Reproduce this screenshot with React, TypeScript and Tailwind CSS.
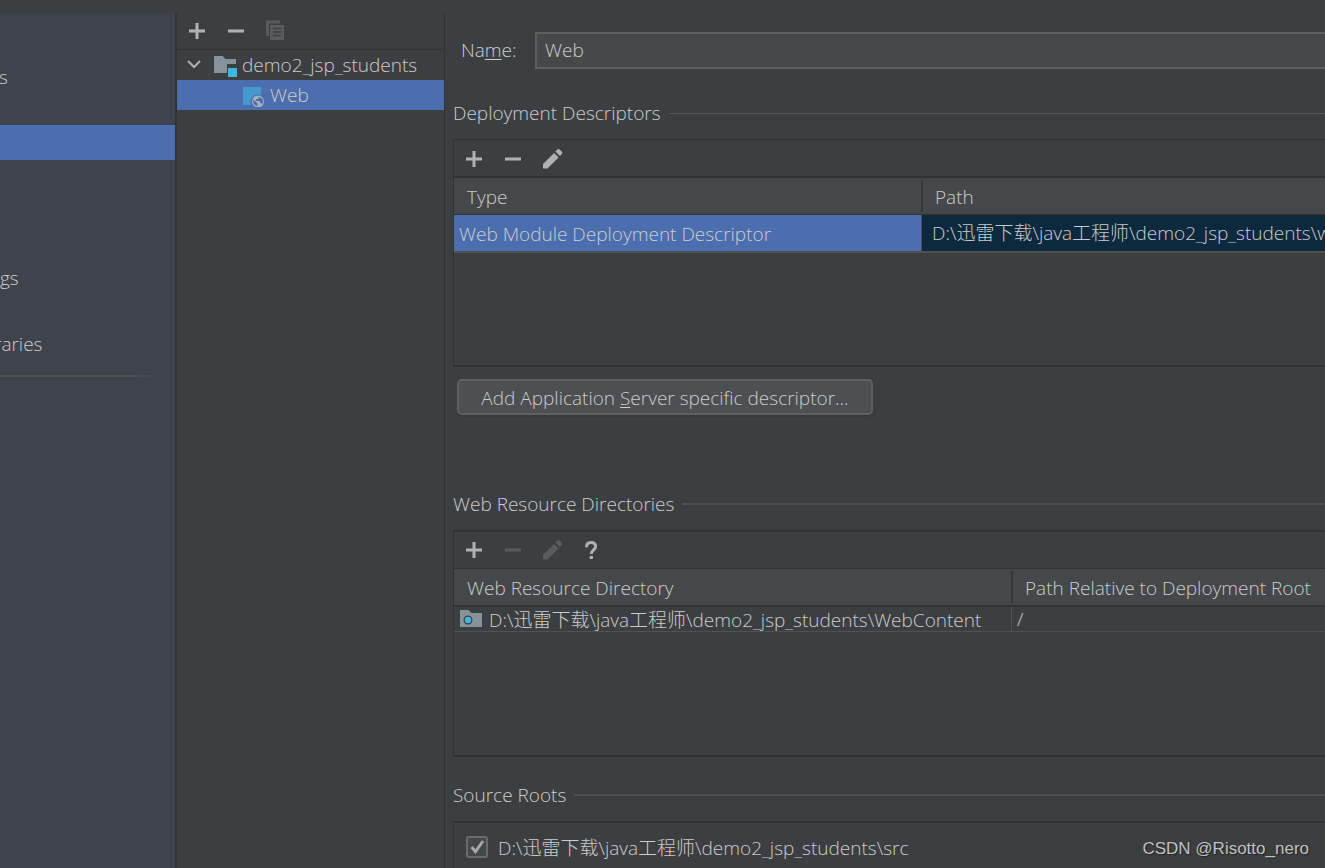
import type { ReactNode } from "react";

const PATH = "D:\\迅雷下载\\java工程师\\demo2_jsp_students\\";

function PlusIcon() {
  return (
    <svg viewBox="0 0 24 24" className="size-6" aria-hidden="true">
      <path d="M10.500 4h3v6.500h6.500v3h-6.500v6.500h-3v-6.500h-6.500v-3h6.500z" fill="currentColor" />
    </svg>
  );
}

function MinusIcon() {
  return (
    <svg viewBox="0 0 24 24" className="size-6" aria-hidden="true">
      <rect x="4" y="10.500" width="16" height="3" fill="currentColor" />
    </svg>
  );
}

function CopyIcon() {
  return (
    <svg viewBox="0 0 24 24" className="size-6" aria-hidden="true">
      <path d="M3 1.500h14v3H6V17H3z" fill="currentColor" />
      <path d="M7 6h14v15H7z" fill="currentColor" />
      <path d="M10 9.500h8M10 13h8M10 16.500h8" stroke="#3c3f41" strokeWidth="1.300" />
    </svg>
  );
}

function PencilIcon() {
  return (
    <svg viewBox="0 0 24 24" className="size-6" aria-hidden="true">
      <path d="M3 17 14.100 5.900l4.500 4.500L7.500 21.500H3z" fill="currentColor" />
      <path d="m15.400 4.600 1.800-1.800a1.900 1.900 0 0 1 2.700 0l1.800 1.800a1.900 1.900 0 0 1 0 2.700l-1.800 1.800z" fill="currentColor" />
    </svg>
  );
}

function HelpIcon() {
  return (
    <svg viewBox="0 0 24 24" className="size-6" aria-hidden="true">
      <path d="M7.500 9.200C7.500 6 9.200 4.500 12 4.500s4.600 1.600 4.600 4c0 3.400-4.300 3.600-4.300 7.500" fill="none" stroke="currentColor" strokeWidth="3" />
      <rect x="10.700" y="18" width="3.200" height="3" fill="currentColor" />
    </svg>
  );
}

function ModuleIcon() {
  return (
    <svg viewBox="0 0 24 24" className="size-6" aria-hidden="true">
      <path d="M1 3h8.500l3 3H23v5H14v9H1z" fill="#87939a" />
      <rect x="15" y="15" width="9" height="9" fill="#40b6e0" />
    </svg>
  );
}

function WebFacetIcon() {
  return (
    <svg viewBox="0 0 24 24" className="size-6" aria-hidden="true">
      <path d="M2 4h18v8.200A7.500 7.500 0 0 0 10 22H2z" fill="#4699cf" />
      <circle cx="17" cy="18.500" r="6" fill="#a4b0ba" />
      <path d="M12.500 16.500l4 4v2.500a4.700 4.700 0 0 1-4-6.500zM17.500 14.200l-.5 1.800h-2v2h4v2h1.500l.7 1.200a4.900 4.900 0 0 0-1.200-6.500z" fill="#4b6eaf" />
    </svg>
  );
}

function WebFolderIcon() {
  return (
    <svg viewBox="0 0 24 24" className="size-6 shrink-0" aria-hidden="true">
      <path d="M1 3h8.500l3 3H23v14H1z" fill="#87939a" />
      <circle cx="9" cy="13" r="4.500" fill="#3c3f41" />
      <circle cx="9" cy="13" r="3.200" fill="#40b6e0" />
    </svg>
  );
}

function ToolButton({ label, disabled, children }: { label: string; disabled?: boolean; children: ReactNode }) {
  return (
    <button type="button" aria-label={label} disabled={disabled} className="text-[#afb1b3] disabled:text-[#5a5b5c]">
      {children}
    </button>
  );
}

function SectionTitle({ thick, children }: { thick?: boolean; children: ReactNode }) {
  return (
    <div className="flex h-6 items-center gap-2">
      <h2>{children}</h2>
      <div className={thick ? "h-[2px] flex-1 bg-[#505152]" : "h-px flex-1 bg-[#555657]"} />
    </div>
  );
}

export default function App() {
  return (
    <div className="relative flex h-screen flex-col overflow-hidden whitespace-nowrap bg-[#3c3f41] pt-[13px] font-['Open_Sans','Noto_Sans_CJK_SC',sans-serif] text-[19px] leading-6 font-light text-[#cccccc]">
      <div className="flex min-h-0 flex-1">
        <nav className="flex w-[175px] shrink-0 flex-col overflow-hidden bg-[#3e434c]">
          <a href="#modules" className="mt-[52px] -ml-px">s</a>
          <a href="#facets" aria-label="Facets" className="mt-9 h-[35px] bg-[#4b6eaf]" />
          <a href="#settings" className="mt-[106px]">gs</a>
          <a href="#libraries" className="mt-[42px] -ml-[6px]">raries</a>
          <div className="mt-[19px] mr-3 h-[2px] bg-linear-to-r from-[#515151] from-80% to-transparent" />
        </nav>

        <aside className="flex w-[270px] shrink-0 flex-col border-r border-l-2 border-r-[#323232] border-l-[#323232]">
          <div className="flex h-[37px] items-center gap-[15px] border-b border-[#323232] pl-2">
            <ToolButton label="Add"><PlusIcon /></ToolButton>
            <ToolButton label="Remove"><MinusIcon /></ToolButton>
            <ToolButton label="Copy" disabled><CopyIcon /></ToolButton>
          </div>
          <ul role="tree">
            <li role="treeitem" aria-expanded="true" className="flex h-[30px] items-center pl-2">
              <svg viewBox="0 0 18 18" className="mr-[10px] size-[18px]" aria-hidden="true">
                <path d="m3 5 6 6 6-6" fill="none" stroke="#afb1b3" strokeWidth="2" />
              </svg>
              <ModuleIcon />
              <span className="ml-[5px]">demo2_jsp_students</span>
            </li>
            <li role="treeitem" aria-selected="true" className="flex h-[30px] items-center bg-[#4b6eaf] pl-16">
              <WebFacetIcon />
              <span className="ml-[5px]">Web</span>
            </li>
          </ul>
        </aside>

        <main className="flex min-w-0 flex-1 flex-col pl-2">
          <div className="mt-[19px] flex items-center pl-2">
            <label htmlFor="name" className="w-[74px] pb-0.5">
              Na<u className="underline-offset-2">m</u>e:
            </label>
            <input id="name" defaultValue="Web" className="h-[37px] min-w-0 flex-1 border-2 border-r-0 border-[#5e6060] bg-[#45494a] px-2 pb-0.5 outline-none" />
          </div>

          <div className="mt-8">
            <SectionTitle>Deployment Descriptors</SectionTitle>
          </div>
          <section className="mt-[14px] h-[228px] border-t border-b-2 border-l border-[#323232]">
            <div className="flex h-[38px] items-center gap-[15px] border-b-2 border-[#323232] pt-px pl-2">
              <ToolButton label="Add descriptor"><PlusIcon /></ToolButton>
              <ToolButton label="Remove descriptor"><MinusIcon /></ToolButton>
              <ToolButton label="Edit descriptor"><PencilIcon /></ToolButton>
            </div>
            <table className="w-full table-fixed border-separate border-spacing-0 text-left">
              <colgroup>
                <col className="w-[467px]" />
                <col />
              </colgroup>
              <thead>
                <tr className="h-[37px] bg-[#45484a]">
                  <th className="border-b border-[#323232] p-0 pt-0.5 pl-[13px] font-light">Type</th>
                  <th className="border-b border-[#323232] p-0 font-light">
                    <div className="flex h-8 items-center border-l-2 border-[#35383a] pt-0.5 pl-3">Path</div>
                  </th>
                </tr>
              </thead>
              <tbody>
                <tr className="h-[38px]">
                  <td className="border-b-2 border-[#4f5051] bg-[#4b6eaf] p-0 pt-0.5 pl-[5px]">Web Module Deployment Descriptor</td>
                  <td className="overflow-hidden border-b-2 border-l border-[#4f5051] bg-[#0d293e] p-0 pl-[10px]">{PATH}w</td>
                </tr>
              </tbody>
            </table>
          </section>

          <button type="button" className="mt-3 ml-1 h-9 w-[416px] self-start rounded-[5px] border-2 border-[#5e6060] bg-[#4c5052] pt-0.5 shadow-[0_2px_0_#37393b]">
            Add Application <u className="underline-offset-2">S</u>erver specific descriptor...
          </button>

          <div className="mt-[77px]">
            <SectionTitle thick>Web Resource Directories</SectionTitle>
          </div>
          <section className="mt-[14px] h-[227px] border-y-2 border-l border-[#323232]">
            <div className="flex h-[37px] items-center gap-[15px] border-b border-[#323232] pl-2">
              <ToolButton label="Add directory"><PlusIcon /></ToolButton>
              <ToolButton label="Remove directory" disabled><MinusIcon /></ToolButton>
              <ToolButton label="Edit directory" disabled><PencilIcon /></ToolButton>
              <ToolButton label="Help"><HelpIcon /></ToolButton>
            </div>
            <table className="w-full table-fixed border-separate border-spacing-0 text-left">
              <colgroup>
                <col className="w-[557px]" />
                <col />
              </colgroup>
              <thead>
                <tr className="h-[38px] bg-[#45484a]">
                  <th className="border-b-2 border-[#323537] p-0 pt-0.5 pl-[13px] font-light">Web Resource Directory</th>
                  <th className="border-b-2 border-[#323537] p-0 font-light">
                    <div className="flex h-8 items-center border-l-2 border-[#35383a] pt-0.5 pl-3">Path Relative to Deployment Root</div>
                  </th>
                </tr>
              </thead>
              <tbody>
                <tr className="h-[25px]">
                  <td className="border-b border-[#4f5254] p-0 pl-[5px]">
                    <div className="flex h-6 items-center gap-[6px]">
                      <WebFolderIcon />
                      <span className="pt-0.5">{PATH}WebContent</span>
                    </div>
                  </td>
                  <td className="border-b border-l border-[#4f5254] p-0 pl-[5px]">/</td>
                </tr>
              </tbody>
            </table>
          </section>

          <div className="mt-[26px]">
            <SectionTitle thick>Source Roots</SectionTitle>
          </div>
          <section className="mt-[14px] flex-1 border-t-2 border-l border-[#323232] pt-3 pl-3">
            <label className="flex h-6 items-center gap-[10px]">
              <span className="grid">
                <input type="checkbox" defaultChecked className="peer col-start-1 row-start-1 size-[22px] appearance-none rounded-[3px] border-2 border-[#6b6b6b] bg-[#43494a]" />
                <svg viewBox="0 0 22 22" className="pointer-events-none invisible col-start-1 row-start-1 size-[22px] peer-checked:visible" aria-hidden="true">
                  <path d="m5.500 11 4 4.500L17 5" fill="none" stroke="#a7a7a7" strokeWidth="3" />
                </svg>
              </span>
              <span className="pt-0.5">{PATH}src</span>
            </label>
          </section>
        </main>
      </div>
      <div className="absolute right-4 bottom-[7px] font-['Liberation_Sans',sans-serif] text-[17px] font-normal text-[#c0c1c2] [text-shadow:1px_1px_1px_#222]">
        CSDN @Risotto_nero
      </div>
    </div>
  );
}
